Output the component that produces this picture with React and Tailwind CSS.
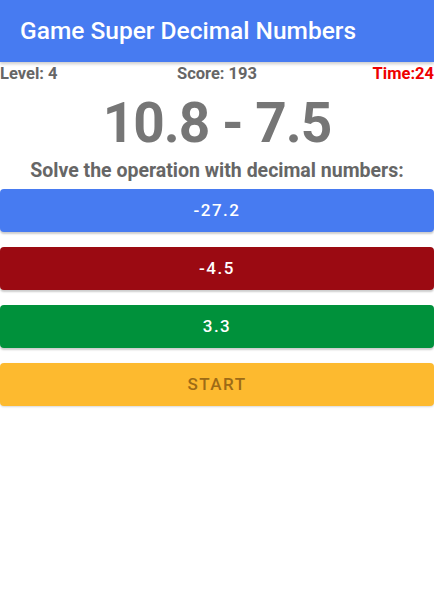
import React from 'react'

const ANSWERS = [
  { label: '-27.2', cls: 'bg-[#477bf1] text-white' },
  { label: '-4.5', cls: 'bg-[#9b0a12] text-white' },
  { label: '3.3', cls: 'bg-[#00913b] text-white' },
]

export default function App() {
  return (
    <div className="w-[434px] h-[592px] bg-white font-['Roboto',sans-serif]">
      {/* App bar */}
      <div className="h-[62px] bg-[#477bf1] flex items-center px-5 shadow-[0_2px_3px_rgba(0,0,0,0.2)]">
        <h1 className="text-white text-[24.5px] font-medium">Game Super Decimal Numbers</h1>
      </div>

      {/* Status row */}
      <div className="flex justify-between items-center h-[24px] text-[16.5px] font-bold text-[#666]">
        <span className="w-[130px]">Level: 4</span>
        <span>Score: 193</span>
        <span className="w-[130px] text-right text-[#ee0000]">Time:24</span>
      </div>

      {/* Operation */}
      <div className="mt-[9px] text-center text-[55px] leading-[56px] font-bold text-[#767676] tracking-[-1px]">
        10.8 - 7.5
      </div>
      <p className="mt-[9px] text-center text-[19.5px] font-bold text-[#666] leading-[22px]">
        Solve the operation with decimal numbers:
      </p>

      {/* Answer buttons */}
      <div className="flex flex-col gap-[15px] mt-[7px]">
        {ANSWERS.map(a => (
          <button
            key={a.label}
            className={`h-[43px] w-full rounded-[4px] text-[17px] font-medium tracking-[1.5px] shadow-[0_2px_2px_rgba(0,0,0,0.2)] ${a.cls}`}
          >
            {a.label}
          </button>
        ))}
        <button className="h-[43px] w-full rounded-[4px] text-[17px] font-medium tracking-[1.5px] bg-[#fdba2f] text-[#9d6b16] shadow-[0_1px_2px_rgba(0,0,0,0.15)]">
          START
        </button>
      </div>
    </div>
  )
}
